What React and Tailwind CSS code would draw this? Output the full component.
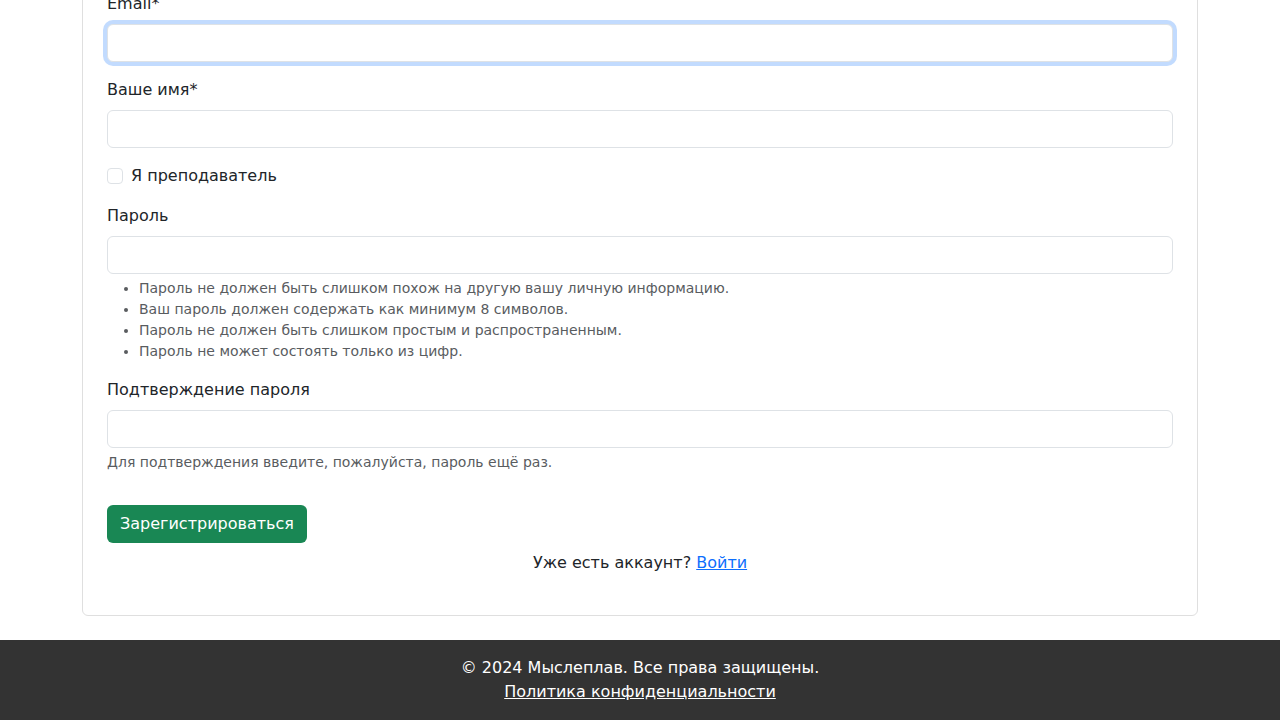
import React from "react";

const hints = [
  "Пароль не должен быть слишком похож на другую вашу личную информацию.",
  "Ваш пароль должен содержать как минимум 8 символов.",
  "Пароль не должен быть слишком простым и распространенным.",
  "Пароль не может состоять только из цифр.",
];

const inputCls =
  "block w-full h-[38px] rounded-[6px] border border-[#dee2e6] bg-white px-3 text-base text-[#212529] outline-none";

const App = () => {
  return (
    <div className="min-h-screen bg-white font-['DejaVu_Sans',sans-serif] text-base leading-6 text-[#212529]">
      {/* card - scrolled so its top is out of view */}
      <div className="mx-auto w-[1140px] px-3 -mt-[33px] mb-6">
        <div className="rounded-[6px] border border-[#dfdfdf] p-6">
          <form>
            <div className="mb-4">
              <label className="block mb-2">Email*</label>
              <input
                type="email"
                className={`${inputCls} border-[#86b7fe] shadow-[0_0_0_4px_rgba(13,110,253,0.25)]`}
              />
            </div>

            <div className="mb-4">
              <label className="block mb-2">Ваше имя*</label>
              <input type="text" className={inputCls} />
            </div>

            <div className="mb-4 flex min-h-6 items-center">
              <span className="block h-4 w-4 rounded-[4px] border border-[#dee2e6] bg-white"></span>
              <label className="ml-2">Я преподаватель</label>
            </div>

            <div>
              <label className="block mb-2">Пароль</label>
              <input type="password" className={inputCls} />
              <div className="mt-1 text-sm leading-[21px] text-[#595c5f]">
                <ul className="list-disc pl-8 mb-4">
                  {hints.map((h) => (
                    <li key={h}>{h}</li>
                  ))}
                </ul>
              </div>
            </div>

            <div className="mb-8">
              <label className="block mb-2">Подтверждение пароля</label>
              <input type="password" className={inputCls} />
              <div className="mt-1 text-sm leading-[21px] text-[#595c5f]">
                Для подтверждения введите, пожалуйста, пароль ещё раз.
              </div>
            </div>

            <button
              type="button"
              className="h-[38px] rounded-[6px] bg-[#198754] px-[13px] text-base text-white"
            >
              Зарегистрироваться
            </button>
          </form>
          <p className="mt-2 mb-4 text-center">
            Уже есть аккаунт?{" "}
            <a href="#" className="text-[#0d6efd] underline">
              Войти
            </a>
          </p>
        </div>
      </div>

      <footer className="bg-[#333333] py-4 text-center text-white">
        <p>© 2024 Мыслеплав. Все права защищены.</p>
        <a href="#" className="underline text-white">
          Политика конфиденциальности
        </a>
      </footer>
    </div>
  );
};

export default App;
